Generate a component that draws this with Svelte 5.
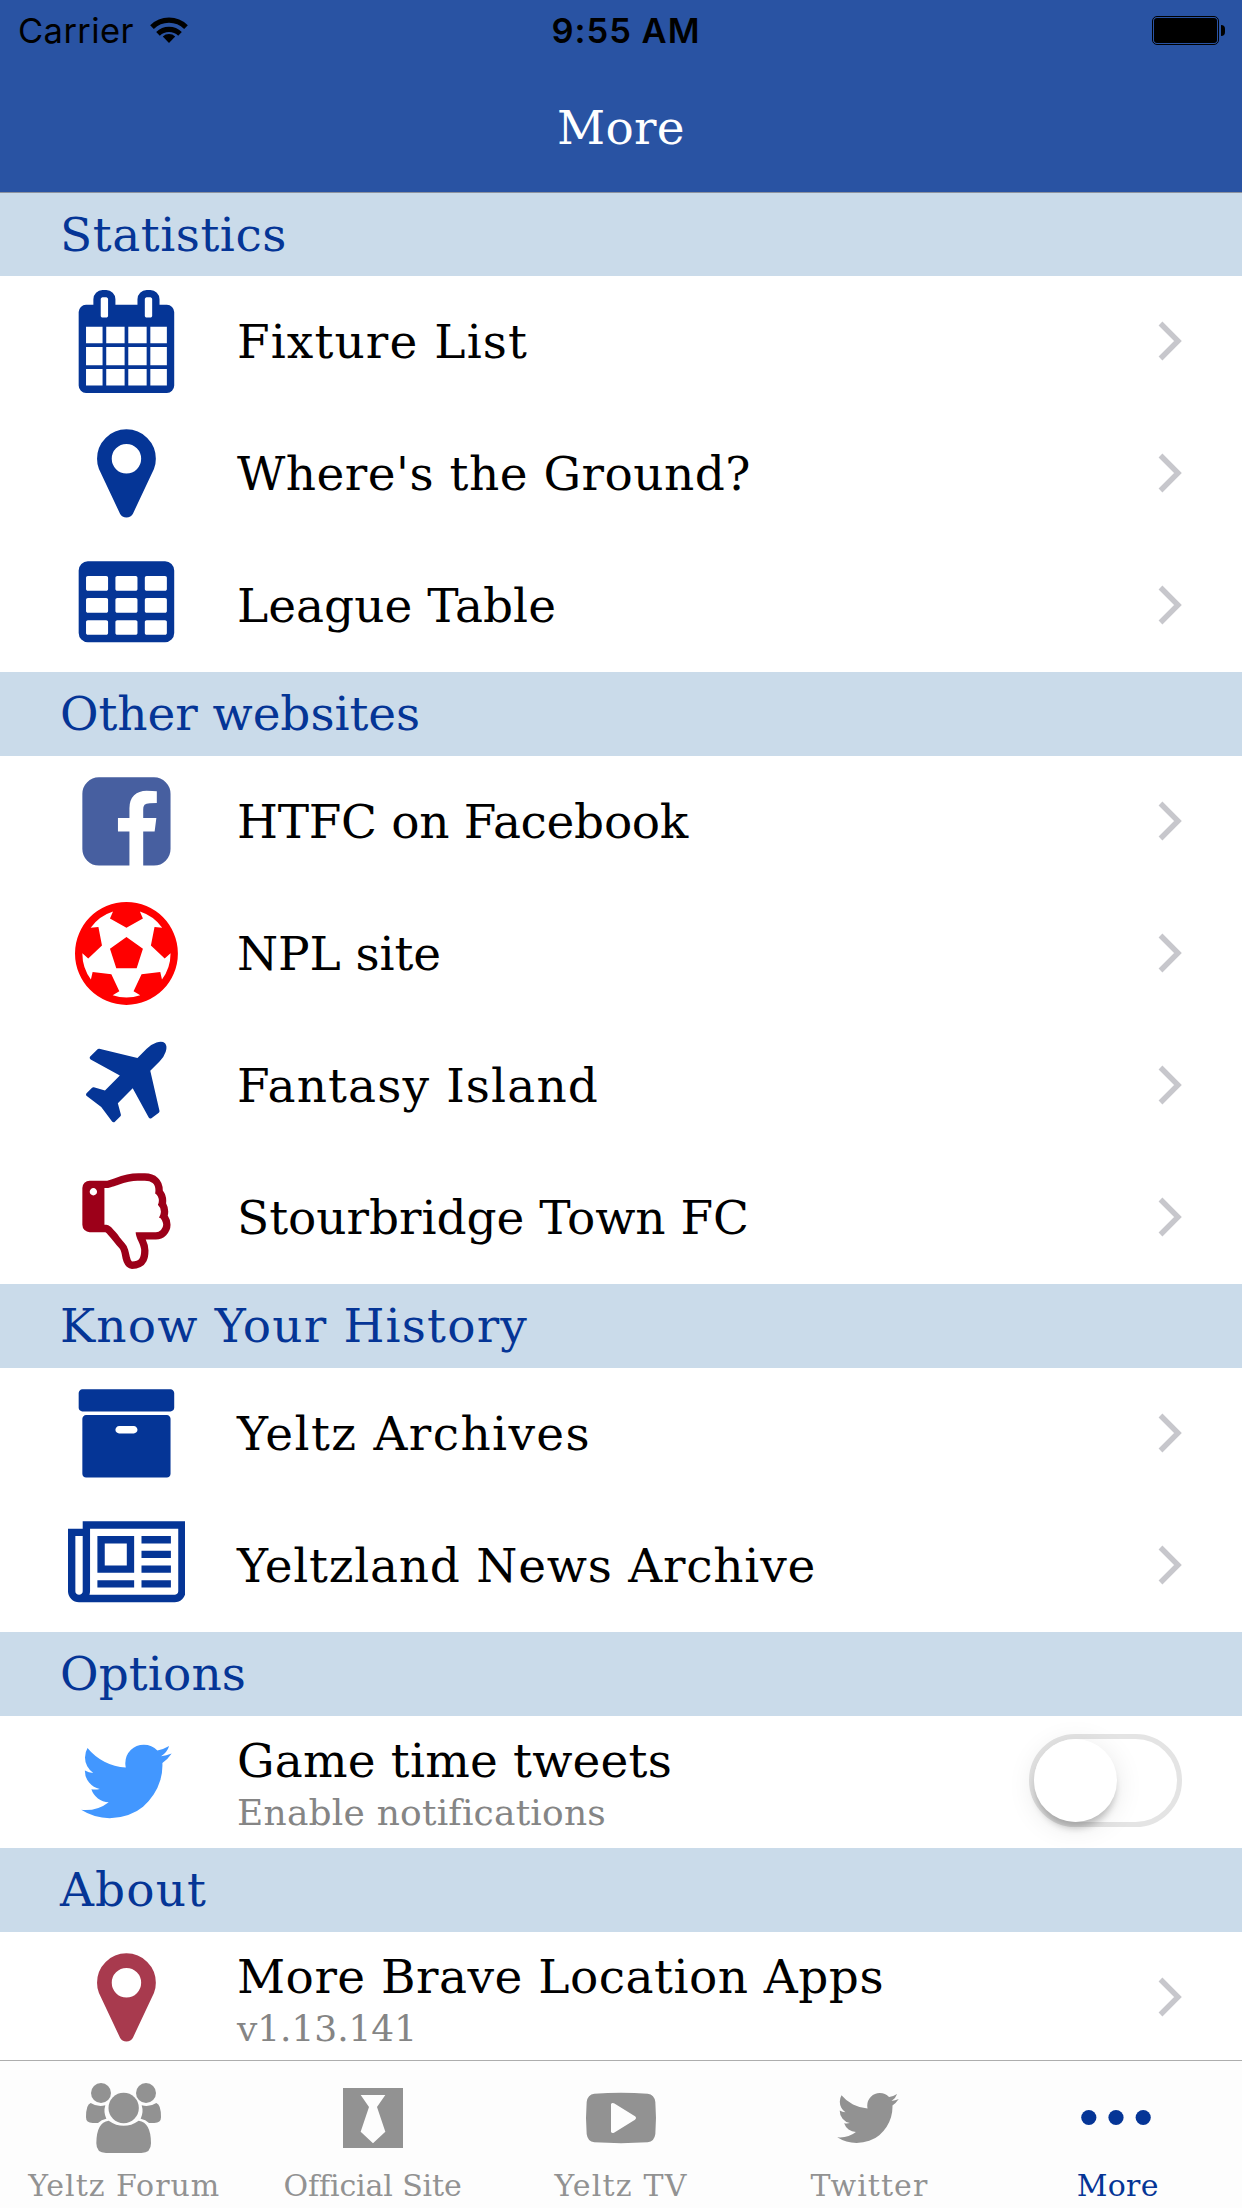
<script>
  const navy = '#053596';
  const pin = 'M1152 640q0-106-75-181t-181-75-181 75-75 181 75 181 181 75 181-75 75-181zm256 0q0 109-33 179l-364 774q-16 33-47.5 52t-67.5 19-67.5-19-46.5-52l-365-774q-33-70-33-179 0-212 150-362t362-150 362 150 150 362z';
  const bird = 'M1684 408q-67 98-162 167 1 14 1 42 0 130-38 259.5t-115.5 248.5-184.5 210.5-258 146-323 54.5q-271 0-496-145 35 4 78 4 225 0 401-138-105-2-188-64.5t-114-159.5q33 5 61 5 43 0 85-11-112-23-185.5-111.5t-73.5-205.5v-4q68 38 146 41-66-44-105-115t-39-154q0-88 44-163 121 149 294.5 238.5t371.5 99.5q-8-38-8-74 0-134 94.5-228.5t228.5-94.5q140 0 236 102 109-21 205-78-37 115-142 178 93-10 186-50z';
  const cell = (x, y) => `M${x} ${y}v-192q0-14-9-23t-23-9h-320q-14 0-23 9t-9 23v192q0 14 9 23t23 9h320q14 0 23-9t9-23z`;
  const table =
    [576, 1088, 1600].map((x) => [608, 992, 1376].map((y) => cell(x, y)).join('')).join('') +
    'M1728 288v1088q0 66-47 113t-113 47h-1344q-66 0-113-47t-47-113v-1088q0-66 47-113t113-47h1344q66 0 113 47t47 113z';
  const calendar = 'M192 1664h288v-288h-288v288zm352 0h320v-288h-320v288zm-352-352h288v-320h-288v320zm352 0h320v-320h-320v320zm-352-384h288v-288h-288v288zm736 736h320v-288h-320v288zm-384-736h320v-288h-320v288zm768 736h288v-288h-288v288zm-384-352h320v-320h-320v320zm-352-864v-288q0-13-9.5-22.5t-22.5-9.5h-64q-13 0-22.5 9.5t-9.5 22.5v288q0 13 9.5 22.5t22.5 9.5h64q13 0 22.5-9.5t9.5-22.5zm736 864h288v-320h-288v320zm-384-384h320v-288h-320v288zm384 0h288v-288h-288v288zm32-480v-288q0-13-9.5-22.5t-22.5-9.5h-64q-13 0-22.5 9.5t-9.5 22.5v288q0 13 9.5 22.5t22.5 9.5h64q13 0 22.5-9.5t9.5-22.5zm384-64v1280q0 52-38 90t-90 38h-1408q-52 0-90-38t-38-90v-1280q0-52 38-90t90-38h128v-96q0-66 47-113t113-47h64q66 0 113 47t47 113v96h384v-96q0-66 47-113t113-47h64q66 0 113 47t47 113v96h128q52 0 90 38t38 90z';
  const facebook = 'M1376 128q119 0 203.5 84.5t84.5 203.5v960q0 119-84.5 203.5t-203.5 84.5h-188v-595h199l30-232h-229v-148q0-56 23.5-84t91.5-28l122-1v-207q-63-9-178-9-136 0-217.5 80t-81.5 226v171h-200v232h200v595h-532q-119 0-203.5-84.5t-84.5-203.5v-960q0-119 84.5-203.5t203.5-84.5h960z';
  const ball = 'M609 816l287-208 287 208-109 336h-355zm287-816q182 0 348 71t286 191 191 286 71 348-71 348-191 286-286 191-348 71-348-71-286-191-191-286-71-348 71-348 191-286 286-191 348-71zm619 1350q149-203 149-454v-3l-102 89-240-224 63-323 134 12q-150-206-389-282l53 124-287 159-287-159 53-124q-239 76-389 282l135-12 62 323-240 224-102-89v3q0 251 149 454l30-132 326 40 139 298-116 69q117 39 240 39t240-39l-116-69 139-298 326-40z';
  const plane = 'M1568 160q44 52 12 148t-108 172l-161 161 160 696q5 19-12 33l-128 96q-7 6-19 6-4 0-7-1-15-3-21-16l-279-508-259 259 53 194q5 17-8 31l-96 96q-9 9-23 9h-2q-15-2-24-13l-189-252-252-189q-11-7-13-23-1-13 9-25l96-97q9-9 23-9 6 0 8 1l194 53 259-259-508-279q-14-8-17-24-2-16 9-27l128-128q14-13 30-8l665 159 160-160q76-76 172-108t148 12z';
  const thumb = 'M384 448q0-26-19-45t-45-19-45 19-19 45 19 45 45 19 45-19 19-45zm1152 576q0-35-21.5-81t-53.5-47q15-17 25-47.5t10-55.5q0-69-53-119 18-31 18-69 0-37-17.5-73.5t-47.5-52.5q5-30 5-56 0-85-49-126t-136-41h-128q-131 0-342 73-5 2-29 10.5t-35.5 12.5-35 11.5-38 11-31 6.5-33 3h-32v640h32q16 0 35.5 9t40 27 38.5 35.5 40 44 34.5 42.5 31.5 41 23 30q55 68 77 91 41 43 59.5 109.5t30.5 125.5 38 85q96 0 128-47t32-145q0-59-48-160.5t-48-159.5h352q50 0 89-38.5t39-89.5zm128 1q0 103-76 179t-180 76h-176q48 99 48 192 0 118-35 186-35 69-102 101.5t-151 32.5q-51 0-90-37-34-33-54-82t-25.5-90.5-17.5-84.5-31-64q-48-50-107-127-101-131-137-155h-274q-53 0-90.5-37.5t-37.5-90.5v-640q0-53 37.5-90.5t90.5-37.5h288q22 0 138-40 128-44 223-66t200-22h112q140 0 226.5 79t85.5 216v5q60 77 60 178 0 22-3 43 38 67 38 144 0 36-9 69 49 74 49 163z';
  const archive = 'M1088 832q0-26-19-45t-45-19h-256q-26 0-45 19t-19 45 19 45 45 19h256q26 0 45-19t19-45zm576-192v960q0 26-19 45t-45 19h-1408q-26 0-45-19t-19-45v-960q0-26 19-45t45-19h1408q26 0 45 19t19 45zm64-448v256q0 26-19 45t-45 19h-1536q-26 0-45-19t-19-45v-256q0-26 19-45t45-19h1536q26 0 45 19t19 45z';
  const news = 'M1024 512h-384v384h384v-384zm128 640v128h-640v-128h640zm0-768v640h-640v-640h640zm640 768v128h-512v-128h512zm0-256v128h-512v-128h512zm0-256v128h-512v-128h512zm0-256v128h-512v-128h512zm-1536 960v-960h-128v960q0 26 19 45t45 19 45-19 19-45zm1664 0v-1088h-1536v1088q0 33-11 64h1483q26 0 45-19t19-45zm128-1216v1216q0 80-56 136t-136 56h-1664q-80 0-136-56t-56-136v-1088h256v-128h1792z';

  const sections = [
    { title: 'Statistics', w: 227, rows: [
      { label: 'Fixture List', w: 291, path: calendar, color: navy },
      { label: "Where's the Ground?", w: 514, path: pin, color: navy },
      { label: 'League Table', w: 319, path: table, color: navy }
    ] },
    { title: 'Other websites', w: 360, rows: [
      { label: 'HTFC on Facebook', w: 451, path: facebook, color: '#475fa0' },
      { label: 'NPL site', w: 204, path: ball, color: '#ff0000' },
      { label: 'Fantasy Island', w: 362, path: plane, color: navy },
      { label: 'Stourbridge Town FC', w: 512, path: thumb, color: '#9c0019' }
    ] },
    { title: 'Know Your History', w: 468, rows: [
      { label: 'Yeltz Archives', w: 354, path: archive, color: navy },
      { label: 'Yeltzland News Archive', w: 579, path: news, color: navy, wide: true }
    ] },
    { title: 'Options', w: 186, rows: [
      { label: 'Game time tweets', w: 435, sub: 'Enable notifications', sw: 369, path: bird, color: '#4297ff', toggle: true }
    ] },
    { title: 'About', w: 147, rows: [
      { label: 'More Brave Location Apps', w: 647, sub: 'v1.13.141', sw: 180, path: pin, color: '#a83a4e' }
    ] }
  ];

  const tabs = [
    { label: 'Yeltz Forum', w: 192, icon: 'people' },
    { label: 'Official Site', w: 178, icon: 'tie' },
    { label: 'Yeltz TV', w: 133, icon: 'tv' },
    { label: 'Twitter', w: 118, icon: 'bird' },
    { label: 'More', w: 82, icon: 'more', active: true }
  ];

  // Spreads a label's tracking so that it fills the given width.
  function fit(node, width) {
    node.style.letterSpacing = '0px';
    const gap = (width - node.getBoundingClientRect().width) / node.textContent.length;
    node.style.letterSpacing = `${gap.toFixed(3)}px`;
  }
</script>

<div class="screen">
  <header>
    <div class="status">
      <div class="carrier">
        <span use:fit={116}>Carrier</span>
        <svg width="38" height="28" viewBox="0 0 38 28">
          <g fill="none" stroke="#000" stroke-width="5.2">
            <path d="M2 12.2a24.2 24.2 0 0 1 34 0" />
            <path d="M8 18.8a15.8 15.8 0 0 1 22 0" />
          </g>
          <path d="M12.8 21.6a9 9 0 0 1 12.4 0L19 28z" />
        </svg>
      </div>
      <div class="time"><span use:fit={149}>9:55 AM</span></div>
      <div class="battery"><div class="cell"><i></i></div><b></b></div>
    </div>
    <h1><span use:fit={128}>More</span></h1>
  </header>

  <main>
    {#each sections as s}
      <section>
        <h2><span use:fit={s.w}>{s.title}</span></h2>
        {#each s.rows as r}
          <div class="row">
            <div class="icon">
              <svg width={r.wide ? 117.6 : 102.9} height="102.9" viewBox={r.wide ? '0 0 2048 1792' : '0 0 1792 1792'} fill={r.color}>
                <path fill-rule="evenodd" d={r.path} />
              </svg>
            </div>
            <div class="text" class:double={r.sub}>
              <div class="label"><span use:fit={r.w}>{r.label}</span></div>
              {#if r.sub}<div class="sub"><span use:fit={r.sw}>{r.sub}</span></div>{/if}
            </div>
            {#if r.toggle}
              <div class="toggle"><div class="knob"></div></div>
            {:else}
              <svg class="chevron" width="25" height="40" viewBox="0 0 25 40"><path d="M2.5 2.5L20 20L2.5 37.5" fill="none" stroke="#c7c7cc" stroke-width="5.4" /></svg>
            {/if}
          </div>
        {/each}
      </section>
    {/each}
  </main>

  <footer>
    {#each tabs as t}
      <div class="tab" class:active={t.active}>
        {#if t.icon === 'people'}
          <svg width="96" height="84" viewBox="0 0 288 252" fill="currentColor">
            <circle cx="75" cy="57" r="30" />
            <circle cx="210" cy="57" r="30" />
            <path d="M44 87q-14 4-14 43q0 17 20 17H66q10-10 25-13A54 54 0 0 1 88 94Q64 100 44 87z" />
            <path d="M241 87q14 4 14 43q0 17-20 17H219q-10-10-25-13A54 54 0 0 0 197 94Q221 100 241 87z" />
            <circle cx="143" cy="102" r="45.5" />
            <path d="M98 140Q61 145 61 208q0 29 29 29H196q29 0 29-29Q225 145 188 140Q143 171 98 140z" />
          </svg>
        {:else if t.icon === 'tie'}
          <svg width="60" height="84" viewBox="0 0 180 252">
            <path fill="currentColor" fill-rule="evenodd" d="M0 42H180V222H0zM53 63L78 99L53 173L90 208L127 173L102 99L127 63z" />
          </svg>
        {:else if t.icon === 'tv'}
          <svg width="70" height="84" viewBox="0 0 210 252">
            <path fill="currentColor" fill-rule="evenodd" d="M25 59Q105 54 185 59Q205 61 208 84Q212 132 208 180Q205 203 185 205Q105 210 25 205Q5 203 2 180Q-2 132 2 84Q5 61 25 59zM75 91V173Q77 179 84 176L147 137Q153 132 147 127L84 88Q77 85 75 91z" />
          </svg>
        {:else if t.icon === 'bird'}
          <svg class="small" width="70" height="70" viewBox="0 0 1792 1792" fill="currentColor"><path d={bird} /></svg>
        {:else}
          <svg width="74" height="84" viewBox="0 0 74 84" fill="currentColor">
            <circle cx="7.8" cy="43.5" r="7.6" /><circle cx="35" cy="43.5" r="7.6" /><circle cx="62.2" cy="43.5" r="7.6" />
          </svg>
        {/if}
        <div class="tab-label"><span use:fit={t.w}>{t.label}</span></div>
      </div>
    {/each}
  </footer>
</div>

<style>
  :global(body) { margin: 0; background: #fff; }
  .screen {
    display: flex;
    flex-direction: column;
    width: 1242px;
    height: 2208px;
    overflow: hidden;
    background: #fff;
    color: #000;
    font-family: 'DejaVu Serif', serif;
    font-variant-ligatures: none;
  }
  span { display: inline-block; white-space: nowrap; }
  header {
    box-sizing: border-box;
    flex: none;
    height: 193px;
    background: #2953a3;
    border-bottom: 1px solid #8d939f;
  }
  .status {
    display: grid;
    grid-template-columns: 1fr auto 1fr;
    align-items: center;
    height: 60px;
    padding: 0 17px 0 18px;
    font: 400 34.5px/60px Inter, sans-serif;
  }
  .carrier { display: flex; align-items: center; gap: 16px; height: 60px; padding-top: 1px; }
  .carrier svg { margin-bottom: 4px; }
  .time { font-weight: 600; padding-top: 1px; padding-left: 9px; }
  .battery { display: flex; justify-content: flex-end; align-items: center; gap: 2px; padding-bottom: 1px; }
  .cell {
    box-sizing: border-box;
    width: 67px;
    height: 29px;
    padding: 1px;
    border: 1px solid #000;
    border-radius: 5px;
  }
  .cell i { display: block; height: 100%; background: #000; border-radius: 3px; }
  .battery b { width: 4px; height: 11px; background: #000; border-radius: 0 4px 4px 0; }
  h1 { margin: 0; height: 132px; font-size: 47px; font-weight: 400; line-height: 136px; text-align: center; color: #fff; }
  main { flex: 1; min-height: 0; overflow: hidden; }
  h2 {
    margin: 0;
    height: 84px;
    padding-left: 60px;
    background: #cadbea;
    color: #053596;
    font-size: 47px;
    font-weight: 400;
    line-height: 84px;
  }
  section:first-child h2 { height: 83px; line-height: 83px; }
  .row { display: flex; align-items: center; height: 132px; padding-right: 59px; }
  .icon { display: flex; flex: none; justify-content: center; width: 103px; padding: 0 61px 1px 75px; }
  .icon svg { flex: none; }
  .text { flex: 1; align-self: stretch; margin-left: -2px; }
  .label { font-size: 47px; line-height: 132px; }
  .double { padding-top: 15px; }
  .double .label { line-height: 60px; }
  .sub { color: #858585; font-size: 36px; line-height: 44px; }
  .chevron { margin-bottom: 2px; }
  .toggle {
    box-sizing: border-box;
    width: 153px;
    height: 93px;
    margin: 0 1px 3px 0;
    border: 5px solid #e4e4e4;
    border-radius: 47px;
  }
  .knob {
    width: 83px;
    height: 83px;
    border-radius: 50%;
    background: #fff;
    box-shadow: 0 8px 7px -2px rgba(0, 0, 0, 0.22), 0 5px 28px rgba(0, 0, 0, 0.1);
  }
  footer {
    box-sizing: border-box;
    display: grid;
    grid-template-columns: repeat(5, 1fr);
    flex: none;
    height: 148px;
    border-top: 1px solid #adadad;
    background: #fdfdfd;
    color: #929292;
  }
  .tab { display: flex; flex-direction: column; align-items: center; padding-top: 13px; }
  .tab svg { flex: none; overflow: visible; }
  .tab .small { margin: 9px 2px 5px 0; }
  .tab.active { color: #053596; }
  .tab-label { margin-top: 9px; font-size: 30px; line-height: 37px; white-space: nowrap; }
</style>
